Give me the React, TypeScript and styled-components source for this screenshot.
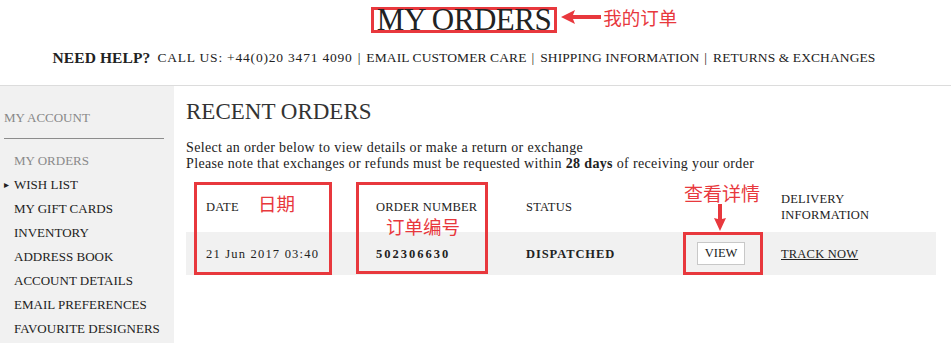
import React from 'react';
import styled, { createGlobalStyle } from 'styled-components';

const RED = '#e8383d';

const GlobalStyle = createGlobalStyle`
  html, body {
    margin: 0;
    padding: 0;
    background: #fff;
    font-family: "Liberation Serif", "Times New Roman", serif;
    color: #222;
  }
`;

const Page = styled.div`
  width: 951px;
  height: 343px;
  overflow: hidden;
`;

const Header = styled.header`
  height: 86px;
  border-bottom: 1px solid #dcdcdc;
  padding-right: 23px;
  display: flex;
  flex-direction: column;
  align-items: center;
  box-sizing: border-box;
`;

const TitleWrap = styled.div`
  position: relative;
  margin-top: 7px;
`;

const Title = styled.h1`
  margin: 0;
  font-size: 31px;
  font-weight: normal;
  line-height: 20px;
  height: 20px;
  padding: 0 3px;
  border: 3px solid ${RED};
  color: #222;
  letter-spacing: -0.5px;
  display: flex;
  align-items: center;
`;

const SideNote = styled.div`
  position: absolute;
  left: calc(100% + 4px);
  top: 1px;
  display: flex;
  align-items: center;
  gap: 2px;
  white-space: nowrap;
`;

const NoteText = styled.span<{ size?: number }>`
  color: ${RED};
  font-family: "Noto Sans CJK SC", sans-serif;
  font-size: ${p => p.size ?? 18}px;
  line-height: 1;
`;

const HelpLine = styled.nav`
  margin-top: 16px;
  font-size: 13.5px;
  display: flex;
  align-items: center;
  white-space: nowrap;
  letter-spacing: 0.1px;
`;

const HelpLabel = styled.strong`
  font-weight: bold;
  font-size: 15.5px;
  margin-right: 7px;
`;

const HelpItem = styled.span<{ wide?: boolean }>`
  letter-spacing: ${p => (p.wide ? '0.8px' : '0.1px')};
  &:not(:last-child)::after {
    content: '|';
    letter-spacing: 0;
    margin: 0 6px 0 5px;
  }
`;

const Body = styled.div`
  display: flex;
  height: 257px;
`;

const Sidebar = styled.aside`
  width: 174px;
  flex: none;
  background: #f1f1f1;
  padding-top: 22px;
  box-sizing: border-box;
`;

const SideTitle = styled.div`
  margin: 0 10px 0 4px;
  padding-bottom: 10px;
  border-bottom: 1px solid #8c8c8c;
  color: #888;
  font-size: 13px;
  line-height: 20px;
`;

const Menu = styled.ul`
  list-style: none;
  margin: 10px 0 0;
  padding: 0;
`;

const MenuItem = styled.li<{ active?: boolean; marked?: boolean }>`
  position: relative;
  padding-left: 14px;
  font-size: 13px;
  line-height: 24px;
  color: ${p => (p.active ? '#8a8a8a' : '#222')};
  &::before {
    content: ${p => (p.marked ? "'▸'" : 'none')};
    position: absolute;
    left: 4px;
    top: 0;
    font-size: 10px;
  }
`;

const Main = styled.main`
  flex: 1;
  padding-left: 12px;
  padding-top: 12px;
`;

const Heading = styled.h2`
  margin: 0;
  font-size: 23px;
  font-weight: normal;
  line-height: 28px;
  color: #333;
`;

const Intro = styled.p`
  margin: 14px 0 0;
  font-size: 14px;
  line-height: 16px;
  letter-spacing: 0.35px;
  color: #222;
`;

const TableWrap = styled.div`
  position: relative;
  margin-top: 10px;
  width: 750px;
`;

const Row = styled.div<{ shaded?: boolean }>`
  display: grid;
  grid-template-columns: 170px 150px 171px 84px 175px;
  align-items: center;
  height: ${p => (p.shaded ? 43 : 50)}px;
  background: ${p => (p.shaded ? '#f1f1f1' : 'transparent')};
`;

const Cell = styled.div<{ bold?: boolean; spacing?: number }>`
  padding-left: 20px;
  font-size: 12.5px;
  line-height: 16px;
  font-weight: ${p => (p.bold ? 'bold' : 'normal')};
  letter-spacing: ${p => p.spacing ?? 0.2}px;
`;

const ViewButton = styled.button`
  margin-left: 20px;
  width: 48px;
  height: 23px;
  border: 1px solid #c8c8c8;
  background: #fff;
  font-family: inherit;
  font-size: 12.5px;
  color: #222;
  padding: 0;
`;

const TrackLink = styled.a`
  color: #222;
  text-decoration: underline;
`;

const MarkBox = styled.div<{ x: number; y: number; w: number; h: number }>`
  position: absolute;
  left: ${p => p.x}px;
  top: ${p => p.y}px;
  width: ${p => p.w}px;
  height: ${p => p.h}px;
  border: 3px solid ${RED};
  box-sizing: border-box;
  pointer-events: none;
`;

const MarkLabel = styled(NoteText)<{ x: number; y: number }>`
  position: absolute;
  left: ${p => p.x}px;
  top: ${p => p.y}px;
  white-space: nowrap;
`;

const MarkArrow = styled.svg<{ x: number; y: number }>`
  position: absolute;
  left: ${p => p.x}px;
  top: ${p => p.y}px;
`;

export default function App() {
  return (
    <Page>
      <GlobalStyle />
      <Header>
        <TitleWrap>
          <Title>MY ORDERS</Title>
          <SideNote>
            <svg width="40" height="14" viewBox="0 0 40 14">
              <polygon points="0,7 14,0 12,5 40,5 40,9 12,9 14,14" fill={RED} />
            </svg>
            <NoteText size={18.5}>我的订单</NoteText>
          </SideNote>
        </TitleWrap>
        <HelpLine>
          <HelpLabel>NEED HELP?</HelpLabel>
          <HelpItem wide>CALL US: +44(0)20 3471 4090</HelpItem>
          <HelpItem>EMAIL CUSTOMER CARE</HelpItem>
          <HelpItem>SHIPPING INFORMATION</HelpItem>
          <HelpItem>RETURNS &amp; EXCHANGES</HelpItem>
        </HelpLine>
      </Header>
      <Body>
        <Sidebar>
          <SideTitle>MY ACCOUNT</SideTitle>
          <Menu>
            <MenuItem active>MY ORDERS</MenuItem>
            <MenuItem marked>WISH LIST</MenuItem>
            <MenuItem>MY GIFT CARDS</MenuItem>
            <MenuItem>INVENTORY</MenuItem>
            <MenuItem>ADDRESS BOOK</MenuItem>
            <MenuItem>ACCOUNT DETAILS</MenuItem>
            <MenuItem>EMAIL PREFERENCES</MenuItem>
            <MenuItem>FAVOURITE DESIGNERS</MenuItem>
          </Menu>
        </Sidebar>
        <Main>
          <Heading>RECENT ORDERS</Heading>
          <Intro>
            Select an order below to view details or make a return or exchange
            <br />
            Please note that exchanges or refunds must be requested within <b>28 days</b> of receiving your order
          </Intro>
          <TableWrap>
            <Row>
              <Cell>DATE</Cell>
              <Cell>ORDER NUMBER</Cell>
              <Cell>STATUS</Cell>
              <Cell />
              <Cell>
                DELIVERY
                <br />
                INFORMATION
              </Cell>
            </Row>
            <Row shaded>
              <Cell spacing={1.2}>21 Jun 2017 03:40</Cell>
              <Cell bold spacing={2}>502306630</Cell>
              <Cell bold spacing={0.9}>DISPATCHED</Cell>
              <div>
                <ViewButton>VIEW</ViewButton>
              </div>
              <Cell>
                <TrackLink href="#">TRACK NOW</TrackLink>
              </Cell>
            </Row>

            <MarkBox x={8} y={0} w={138} h={93} />
            <MarkBox x={170} y={0} w={132} h={92} />
            <MarkBox x={497} y={50} w={80} h={43} />
            <MarkLabel x={72} y={12} size={18.5}>日期</MarkLabel>
            <MarkLabel x={200} y={35} size={18.5}>订单编号</MarkLabel>
            <MarkLabel x={498} y={1} size={19}>查看详情</MarkLabel>
            <MarkArrow x={528} y={22} width="12" height="27" viewBox="0 0 12 27">
              <polygon points="4,0 8,0 8,15 12,14 6,27 0,14 4,15" fill={RED} />
            </MarkArrow>
          </TableWrap>
        </Main>
      </Body>
    </Page>
  );
}
